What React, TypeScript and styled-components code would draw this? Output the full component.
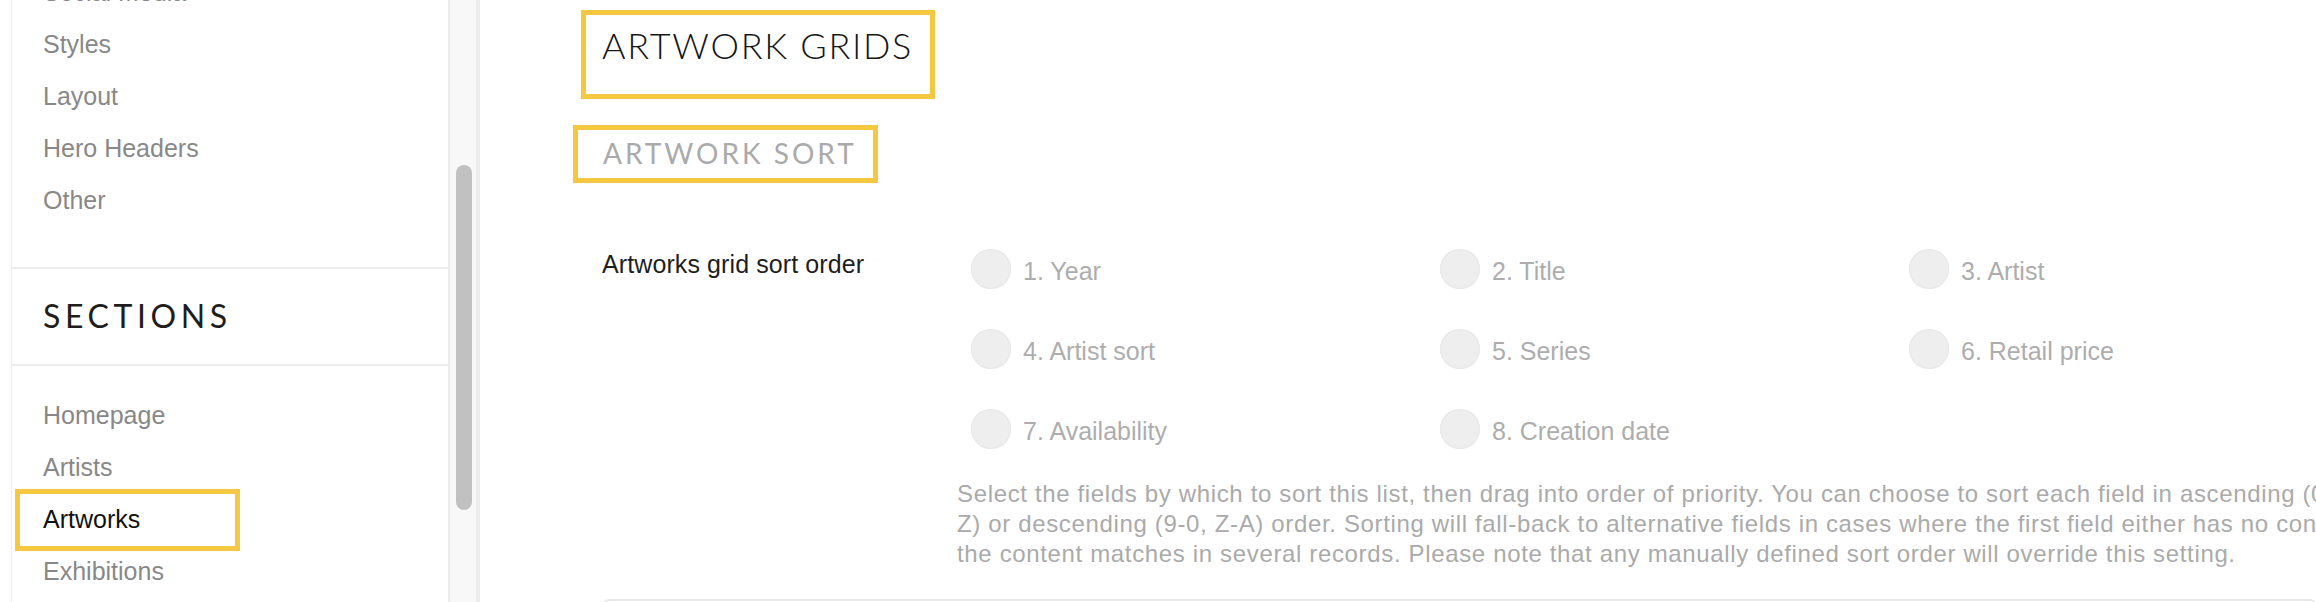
import styled, { createGlobalStyle } from "styled-components";
import { FC } from "react";

const GlobalStyle = createGlobalStyle`
  html, body {
    margin: 0;
    padding: 0;
    background: #ffffff;
    overflow: hidden;
  }
  body {
    font-family: "Liberation Sans", Arial, sans-serif;
    color: #222222;
  }
`;

const Page = styled.div`
  display: flex;
  width: 2316px;
  height: 602px;
  overflow: hidden;
`;

const Sidebar = styled.aside`
  display: flex;
  flex-shrink: 0;
  width: 480px;
  height: 100%;
  padding-left: 11px;
  box-sizing: border-box;
`;

const NavPanel = styled.nav`
  flex: 1;
  border-left: 1px solid #ececec;
  border-right: 2px solid #ececec;
  overflow: hidden;
  background: #ffffff;
`;

const NavGroup = styled.div<{ $first?: boolean }>`
  margin-top: ${(p) => (p.$first ? "-34px" : "0")};
  padding: ${(p) => (p.$first ? "0 0 41px" : "23px 0 0")};
  border-bottom: ${(p) => (p.$first ? "2px solid #ececec" : "none")};
`;

const NavItem = styled.div<{ $active?: boolean }>`
  position: relative;
  padding-left: 31px;
  font-size: 25px;
  line-height: 52px;
  color: ${(p) => (p.$active ? "#111111" : "#888888")};
  white-space: nowrap;

  ${(p) =>
    p.$active &&
    `
    &::after {
      content: "";
      position: absolute;
      left: 3px;
      top: -4px;
      width: 225px;
      height: 62px;
      border: 5px solid #f5c842;
      box-sizing: border-box;
    }
  `}
`;

const SectionTitle = styled.div`
  padding: 27px 0 28px 31px;
  border-bottom: 2px solid #ececec;
  font-family: Lato, "Liberation Sans", sans-serif;
  font-size: 32px;
  line-height: 40px;
  letter-spacing: 4.6px;
  color: #1e1e1e;
`;

const ScrollTrack = styled.div`
  width: 30px;
  flex-shrink: 0;
  background: #f8f8f8;
  border-right: 4px solid #ececec;
  box-sizing: border-box;
  padding: 165px 0 0 6px;
`;

const ScrollThumb = styled.div`
  width: 16px;
  height: 345px;
  border-radius: 8px;
  background: #c1c1c1;
`;

const Main = styled.main`
  flex: 1;
  min-width: 0;
  padding: 10px 0 0 122px;
  overflow: hidden;
`;

const HeadingBlock = styled.div`
  display: flex;
  flex-direction: column;
  align-items: flex-start;
`;

const Heading = styled.h1`
  display: inline-block;
  margin: 0 0 0 -21px;
  padding: 8px 17px 27px 16px;
  border: 5px solid #f5c842;
  font-family: Lato, "Liberation Sans", sans-serif;
  font-weight: 300;
  font-size: 36px;
  line-height: 44px;
  letter-spacing: 1.7px;
  color: #161616;
`;

const SubHeading = styled.h2`
  display: inline-block;
  margin: 26px 0 0 -29px;
  padding: 6px 16px 8px 25px;
  border: 5px solid #f5c842;
  font-family: Lato, "Liberation Sans", sans-serif;
  font-weight: 400;
  font-size: 28px;
  line-height: 34px;
  letter-spacing: 3px;
  color: #aaaaaa;
`;

const FormRow = styled.div`
  display: flex;
  margin-top: 66px;
`;

const FieldLabel = styled.div`
  width: 369px;
  flex-shrink: 0;
  font-size: 25px;
  line-height: 30px;
  letter-spacing: 0.1px;
  color: #1e1e1e;
`;

const Field = styled.div`
  display: flex;
  flex-direction: column;
`;

const OptionGrid = styled.div`
  display: grid;
  grid-template-columns: repeat(3, 469px);
  row-gap: 40px;
`;

const Option = styled.label`
  display: flex;
  align-items: center;
  gap: 12px;
  height: 40px;
`;

const Radio = styled.span`
  width: 40px;
  height: 40px;
  flex-shrink: 0;
  border-radius: 50%;
  background: #eeeeee;
  box-shadow: inset 0 0 0 1px #e7e7e7;
`;

const OptionText = styled.span`
  padding-top: 3px;
  font-size: 25px;
  line-height: 40px;
  color: #adadad;
  white-space: nowrap;
`;

const HelpText = styled.p`
  margin: 30px 0 0 -14px;
  font-size: 24px;
  line-height: 30px;
  letter-spacing: 0.65px;
  color: #aaaaaa;
  white-space: nowrap;
`;

const Card = styled.div`
  margin: 30px 0 0 1px;
  height: 80px;
  border: 2px solid #e8e8e8;
  border-radius: 6px;
`;

const topLinks = ["Social Media", "Styles", "Layout", "Hero Headers", "Other"];
const sectionLinks = ["Homepage", "Artists", "Artworks", "Exhibitions"];
const sortFields = [
  "1. Year",
  "2. Title",
  "3. Artist",
  "4. Artist sort",
  "5. Series",
  "6. Retail price",
  "7. Availability",
  "8. Creation date",
];

const App: FC = () => {
  return (
    <>
      <GlobalStyle />
      <Page>
        <Sidebar>
          <NavPanel>
            <NavGroup $first>
              {topLinks.map((item) => (
                <NavItem key={item}>{item}</NavItem>
              ))}
            </NavGroup>
            <SectionTitle>SECTIONS</SectionTitle>
            <NavGroup>
              {sectionLinks.map((item) => (
                <NavItem key={item} $active={item === "Artworks"}>
                  {item}
                </NavItem>
              ))}
            </NavGroup>
          </NavPanel>
          <ScrollTrack>
            <ScrollThumb />
          </ScrollTrack>
        </Sidebar>
        <Main>
          <HeadingBlock>
            <Heading>ARTWORK GRIDS</Heading>
            <SubHeading>ARTWORK SORT</SubHeading>
          </HeadingBlock>
          <FormRow>
            <FieldLabel>Artworks grid sort order</FieldLabel>
            <Field>
              <OptionGrid>
                {sortFields.map((f) => (
                  <Option key={f}>
                    <Radio />
                    <OptionText>{f}</OptionText>
                  </Option>
                ))}
              </OptionGrid>
              <HelpText>
                Select the fields by which to sort this list, then drag into order of priority. You can choose to sort each field in ascending (0-9, A-
                <br />
                Z) or descending (9-0, Z-A) order. Sorting will fall-back to alternative fields in cases where the first field either has no content or
                <br />
                the content matches in several records. Please note that any manually defined sort order will override this setting.
              </HelpText>
            </Field>
          </FormRow>
          <Card />
        </Main>
      </Page>
    </>
  );
};

export default App;
